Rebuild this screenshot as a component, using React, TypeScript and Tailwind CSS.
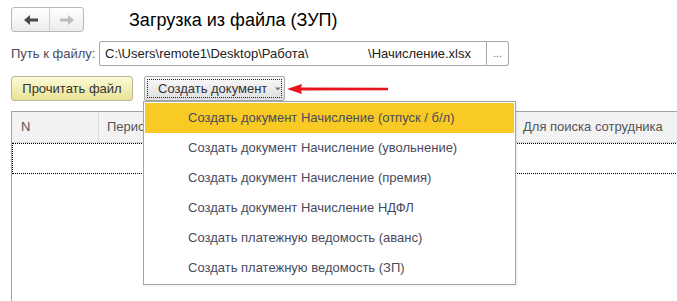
import { useState } from 'react';

const menuItems = [
  'Создать документ Начисление (отпуск / б/л)',
  'Создать документ Начисление (увольнение)',
  'Создать документ Начисление (премия)',
  'Создать документ Начисление НДФЛ',
  'Создать платежную ведомость (аванс)',
  'Создать платежную ведомость (ЗП)',
];

function NavArrow({ dir, color }: { dir: 'left' | 'right'; color: string }) {
  return (
    <svg width="14" height="10" viewBox="0 0 14 10" className={dir === 'right' ? 'rotate-180' : ''}>
      <path d="M0 5 L6 0 L6 3.5 L14 3.5 L14 6.5 L6 6.5 L6 10 Z" fill={color} />
    </svg>
  );
}

export default function App() {
  const [active, setActive] = useState(0);

  return (
    <div className="relative w-[677px] h-[301px] overflow-hidden bg-white font-['Liberation_Sans',Arial,sans-serif] text-[13px]">
      {/* Header: history buttons + title */}
      <div className="flex items-center h-[25px] mt-[7px] pl-[11px]">
        <div className="flex h-[25px] w-[73px] rounded-[3px] border border-[#b8b8b8] bg-gradient-to-b from-white to-[#ececec]">
          <div className="flex items-center justify-center w-[38px] border-r border-[#d0d0d0]">
            <NavArrow dir="left" color="#4a4a4a" />
          </div>
          <div className="flex items-center justify-center flex-1">
            <NavArrow dir="right" color="#bdbdbd" />
          </div>
        </div>
        <h1 className="ml-[45px] text-[18px] leading-none text-black">Загрузка из файла (ЗУП)</h1>
      </div>

      {/* Path row */}
      <div className="flex items-center h-[25px] mt-[9px] pl-[11px]">
        <span className="w-[88px] text-[#4a4a5e]">Путь к файлу:</span>
        <div className="flex h-[25px] w-[410px]">
          <div className="flex items-center flex-1 pl-[5px] pr-[15px] border border-[#a8a8a8] rounded-l-[2px] text-[#222]">
            <span>C:\Users\remote1\Desktop\Работа\</span>
            <span className="flex-1" />
            <span>\Начисление.xlsx</span>
          </div>
          <div className="flex items-center justify-center w-[22px] border border-l-0 border-[#a8a8a8] rounded-r-[3px] text-[10px] text-[#555]">
            ...
          </div>
        </div>
      </div>

      {/* Command bar */}
      <div className="flex items-center h-[25px] mt-[10px] pl-[11px]">
        <button className="h-[25px] w-[122px] rounded-[3px] border border-[#b9b697] bg-gradient-to-b from-[#fbfbd6] to-[#e9e394] text-[#333]">
          Прочитать файл
        </button>
        <button className="flex ml-[11px] h-[25px] w-[141px] rounded-[2px] border border-[#a9a9a9] bg-gradient-to-b from-[#fafafa] to-[#dedede] p-[2px]">
          <span className="flex items-center w-full h-full whitespace-nowrap border border-dotted border-[#222] pl-[10px] text-[#333]">
            Создать документ
            <svg width="7" height="4" viewBox="0 0 7 4" className="ml-[8px]">
              <path d="M0 0 H7 L3.5 4 Z" fill="#777" />
            </svg>
          </span>
        </button>
      </div>

      {/* Table */}
      <div className="mt-[10px] ml-[11px] h-[200px] border-l border-t border-[#a3a3a3]">
        <div className="flex h-[31px] bg-[#f2f2f2] text-[#555] border-b border-[#d6d6d6]">
          <div className="flex items-center w-[87px] pl-[9px] border-r border-[#dcdcdc]">N</div>
          <div className="flex items-center w-[417px] pl-[8px] border-r border-[#dcdcdc]">Период</div>
          <div className="flex items-center pl-[7px] whitespace-nowrap">Для поиска сотрудника</div>
        </div>
        <div className="h-[31px] w-[700px] border border-dotted border-black" />
      </div>

      {/* Dropdown menu */}
      <div className="absolute left-[143px] top-[101px] w-[373px] border border-[#a3a3a3] bg-white p-[1px] shadow-[1px_1px_2px_rgba(0,0,0,0.08)]">
        {menuItems.map((item, i) => (
          <div
            key={item}
            onMouseEnter={() => setActive(i)}
            className={`flex items-center h-[30px] pl-[43px] text-[#4a4a5e] ${i === active ? 'bg-[#f9ca24]' : ''}`}
          >
            {item}
          </div>
        ))}
      </div>

      {/* Red annotation arrow */}
      <svg className="absolute left-[286px] top-[83px]" width="104" height="12" viewBox="0 0 104 12">
        <path d="M1 6 L16 1 L15 4.5 L102 4.8 L102 7.2 L15 7.5 L16 11 Z" fill="#e8131b" />
      </svg>
    </div>
  );
}
